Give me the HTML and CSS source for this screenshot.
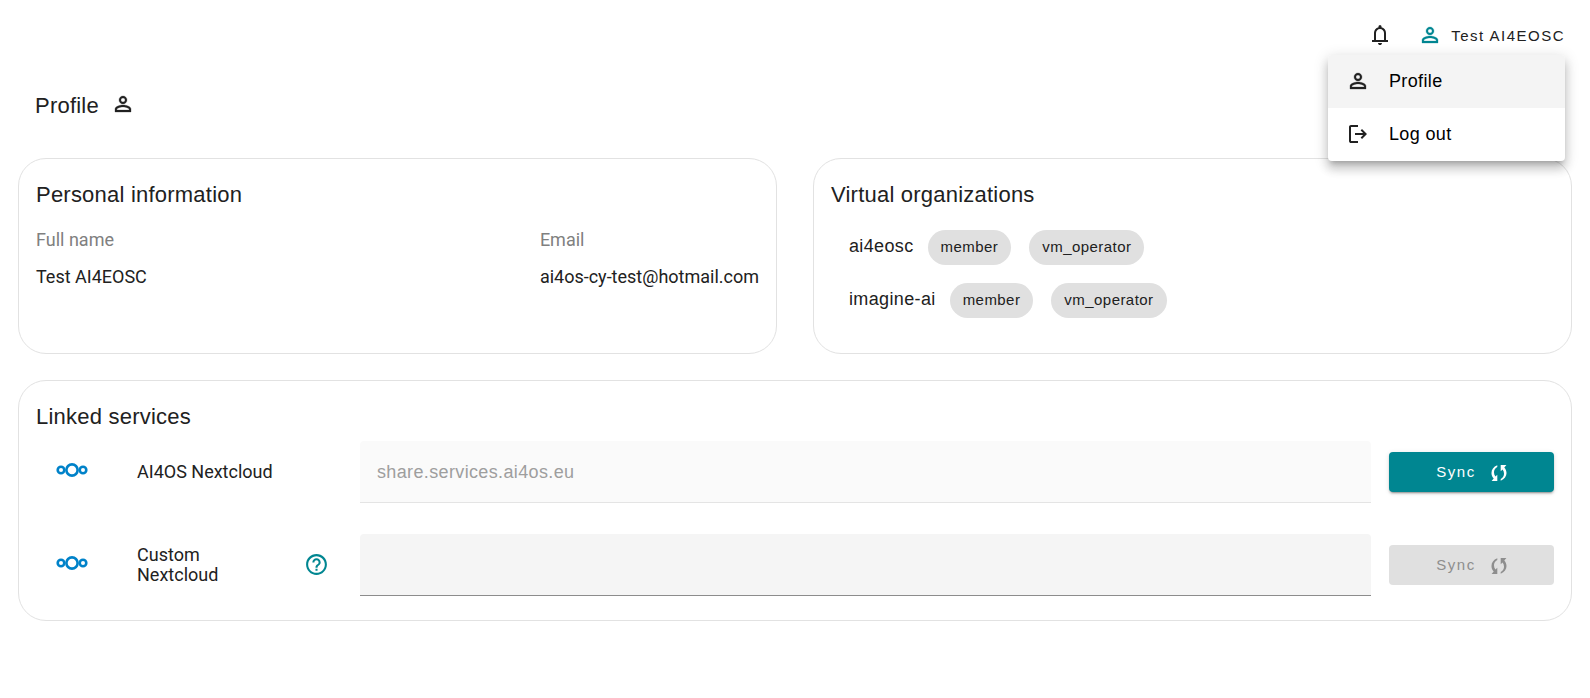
FILE: index.html
```html
<!DOCTYPE html>
<html lang="en">
<head>
<meta charset="utf-8">
<meta name="viewport" content="width=device-width, initial-scale=1">
<title>Profile</title>
<link rel="stylesheet" href="styles.css">
</head>
<body>
<svg class="sprite" aria-hidden="true">
  <symbol id="person" viewBox="0 0 24 24"><path d="M12 5.900a2.100 2.100 0 1 1 0 4.200 2.100 2.100 0 0 1 0-4.200m0 9c2.970 0 6.100 1.460 6.100 2.100v1.100H5.900V17c0-.64 3.130-2.100 6.100-2.100M12 4C9.790 4 8 5.790 8 8s1.790 4 4 4 4-1.790 4-4-1.790-4-4-4zm0 9c-2.670 0-8 1.340-8 4v3h16v-3c0-2.660-5.330-4-8-4z" stroke="currentColor" stroke-width=".3"/></symbol>
  <symbol id="bell" viewBox="0 0 24 24"><path d="M4 19v-2h2v-7q0-2.075 1.250-3.687T10.500 4.200v-.7q0-.625.438-1.062T12 2t1.063.438T13.500 3.500v.7q2 .5 3.250 2.113T18 10v7h2v2zm8 3q-.825 0-1.412-.587T10 20h4q0 .825-.587 1.413T12 22m-4-5h8v-7q0-1.650-1.175-2.825T12 6T9.175 7.175T8 10z"/></symbol>
  <symbol id="logout" viewBox="0 0 24 24"><path d="M5 21q-.825 0-1.412-.587T3 19V5q0-.825.588-1.412T5 3h7v2H5v14h7v2zm11-4l-1.375-1.450l2.550-2.550H9v-2h8.175l-2.550-2.550L16 7l5 5z"/></symbol>
  <symbol id="help" viewBox="0 0 24 24"><path d="M11 16h2v2h-2zm1-14C6.480 2 2 6.480 2 12s4.480 10 10 10 10-4.480 10-10S17.520 2 12 2m0 18c-4.410 0-8-3.590-8-8s3.590-8 8-8 8 3.590 8 8-3.590 8-8 8m0-14c-2.210 0-4 1.790-4 4h2c0-1.100.9-2 2-2s2 .9 2 2c0 2-3 1.750-3 5h2c0-2.250 3-2.500 3-5 0-2.210-1.790-4-4-4"/></symbol>
  <symbol id="sync" viewBox="0 0 16 16"><path d="M6.300.3v1.700C2.800 3.800 1.900 8 4.400 11.600L6.300 9.800V16H.600l2.100-2.400C-1.300 9 .200 2.500 6.300.3zM9.700 15.700V14C13.200 12.200 14.100 8 11.600 4.400L9.700 6.200V0h5.700l-2.100 2.400C17.300 7 15.800 13.500 9.700 15.700z"/></symbol>
  <symbol id="nextcloud" viewBox="0 0 32 14"><g fill="none" stroke="currentColor" stroke-width="2.600"><circle cx="16" cy="7" r="5.600"/><circle cx="5" cy="7" r="3.300"/><circle cx="27" cy="7" r="3.300"/></g></symbol>
</svg>

<header class="topbar">
  <button class="icon-button" type="button" aria-label="Notifications"><svg class="icon"><use href="#bell"/></svg></button>
  <div class="account">
    <button class="account-button" type="button" aria-haspopup="menu" aria-expanded="true">
      <svg class="icon icon-accent"><use href="#person"/></svg>
      <span class="account-name">Test AI4EOSC</span>
    </button>
    <div class="menu" role="menu">
      <button class="menu-item menu-item-active" type="button" role="menuitem"><svg class="icon"><use href="#person"/></svg><span>Profile</span></button>
      <button class="menu-item" type="button" role="menuitem"><svg class="icon"><use href="#logout"/></svg><span>Log out</span></button>
    </div>
  </div>
</header>

<main class="page">
  <div class="page-title">
    <h1>Profile</h1>
    <svg class="icon"><use href="#person"/></svg>
  </div>

  <div class="cards">
    <section class="card">
      <h2>Personal information</h2>
      <dl class="facts">
        <div><dt>Full name</dt><dd>Test AI4EOSC</dd></div>
        <div><dt>Email</dt><dd>ai4os-cy-test@hotmail.com</dd></div>
      </dl>
    </section>

    <section class="card">
      <h2>Virtual organizations</h2>
      <ul class="orgs">
        <li><span class="org-name">ai4eosc</span><span class="chip">member</span><span class="chip">vm_operator</span></li>
        <li><span class="org-name">imagine-ai</span><span class="chip">member</span><span class="chip">vm_operator</span></li>
      </ul>
    </section>

    <section class="card card-wide">
      <h2>Linked services</h2>
      <div class="services">
        <div class="service">
          <div class="service-info">
            <svg class="service-logo"><use href="#nextcloud"/></svg>
            <label for="ai4os">AI4OS Nextcloud</label>
          </div>
          <input class="field" id="ai4os" type="text" value="share.services.ai4os.eu" disabled>
          <button class="sync" type="button"><span>Sync</span><svg class="sync-icon"><use href="#sync"/></svg></button>
        </div>
        <div class="service">
          <div class="service-info">
            <svg class="service-logo"><use href="#nextcloud"/></svg>
            <label for="custom">Custom Nextcloud</label>
            <svg class="help" role="img" aria-label="Help"><use href="#help"/></svg>
          </div>
          <input class="field" id="custom" type="text">
          <button class="sync" type="button" disabled><span>Sync</span><svg class="sync-icon"><use href="#sync"/></svg></button>
        </div>
      </div>
    </section>
  </div>
</main>
</body>
</html>
```
FILE: styles.css
```css
:root {
  --accent: #008691;
  --text: #212121;
  --sans: "Liberation Sans", Arial, sans-serif;
  --tracking: 0.02em;
  --tracking-button: 0.1em;
}

* { box-sizing: border-box; }

body {
  margin: 0;
  background: #fff;
  color: var(--text);
  font: 18px/20px Roboto, sans-serif;
}

button, input { font: inherit; color: inherit; }

button {
  padding: 0;
  border: 0;
  background: none;
  font-family: var(--sans);
}

h1, h2 {
  margin: 0;
  font: 400 22px/28px var(--sans);
  letter-spacing: 0.01em;
}

.sprite { display: none; }

.icon {
  display: block;
  flex: none;
  width: 24px;
  height: 24px;
  fill: currentColor;
}

.icon-accent { color: var(--accent); }

.topbar {
  display: flex;
  justify-content: flex-end;
  align-items: center;
  gap: 26px;
  height: 70px;
  padding: 0 25px;
}

.account { position: relative; }

.account-button {
  display: flex;
  align-items: center;
  gap: 9px;
  font-size: 15px;
  letter-spacing: var(--tracking-button);
}

.account-name { padding-top: 2px; }

.menu {
  position: absolute;
  top: 32px;
  right: 0;
  z-index: 1;
  width: 237px;
  overflow: hidden;
  border-radius: 4px;
  background: #fff;
  box-shadow: 0 5px 5px -3px rgba(0, 0, 0, .2), 0 8px 10px 1px rgba(0, 0, 0, .14), 0 3px 14px 2px rgba(0, 0, 0, .12);
}

.menu-item {
  display: flex;
  align-items: center;
  gap: 19px;
  width: 100%;
  height: 53px;
  padding: 0 18px 2px;
  color: #000;
  letter-spacing: var(--tracking);
}

.menu-item .icon { color: var(--text); }
.menu-item-active { background: #f4f4f4; }

.page { padding: 0 18px 77px; }

.page-title {
  display: flex;
  align-items: flex-start;
  gap: 12px;
  padding: 22px 17px 38px;
}

.cards {
  display: grid;
  grid-template-columns: 1fr 1fr;
  gap: 26px 36px;
}

.card {
  padding: 22px 17px 35px;
  border: 1px solid #e2e2e2;
  border-radius: 28px;
  background: #fff;
}

.card-wide {
  grid-column: 1 / -1;
  padding-bottom: 24px;
}

.facts {
  display: flex;
  justify-content: space-between;
  margin: 21px 0 0;
}

.facts dt { color: #808080; }
.facts dd { margin: 17px 0 0; }

.orgs {
  display: flex;
  flex-direction: column;
  gap: 18px;
  margin: 21px 0 0;
  padding: 0 18px;
  list-style: none;
  font-family: var(--sans);
  letter-spacing: var(--tracking);
}

.orgs li {
  display: flex;
  align-items: center;
  gap: 18px;
}

.org-name {
  margin-right: -4px;
  padding-bottom: 3px;
}

.chip {
  padding: 0 13px 2px;
  border-radius: 18px;
  background: #e0e0e0;
  font-size: 15px;
  line-height: 33px;
  letter-spacing: 0.03em;
}

.services {
  display: flex;
  flex-direction: column;
  gap: 31px;
  margin-top: 10px;
}

.service {
  display: flex;
  align-items: center;
  gap: 18px;
}

.service-info {
  display: grid;
  grid-template-columns: 101px 136px 1fr;
  align-items: center;
  flex: none;
  width: 306px;
}

.service-logo {
  width: 32px;
  height: 14px;
  margin: 0 0 4px 20px;
  color: #0082c9;
}

.help {
  justify-self: end;
  width: 25px;
  height: 25px;
  margin: 0 13px 2px 0;
  fill: var(--accent);
}

.field {
  flex: 1;
  min-width: 0;
  height: 62px;
  padding: 2px 17px 0;
  border: 0;
  border-bottom: 1px solid #8c8c8c;
  border-radius: 4px 4px 0 0;
  background: #f5f5f5;
  font-family: var(--sans);
  letter-spacing: var(--tracking);
}

.field:disabled {
  border-color: #e4e4e4;
  background: #fafafa;
  color: #9e9e9e;
}

.sync {
  display: flex;
  flex: none;
  align-items: center;
  justify-content: center;
  gap: 15px;
  width: 165px;
  height: 40px;
  border-radius: 4px;
  background: var(--accent);
  color: #fff;
  font-size: 15px;
  letter-spacing: var(--tracking-button);
  box-shadow: 0 3px 1px -2px rgba(0, 0, 0, .2), 0 2px 2px 0 rgba(0, 0, 0, .14), 0 1px 5px 0 rgba(0, 0, 0, .12);
}

.sync:disabled {
  background: #e0e0e0;
  color: #8e8e8e;
  box-shadow: none;
}

.sync-icon {
  width: 16px;
  height: 16px;
  margin-top: 2px;
  fill: currentColor;
}
```
